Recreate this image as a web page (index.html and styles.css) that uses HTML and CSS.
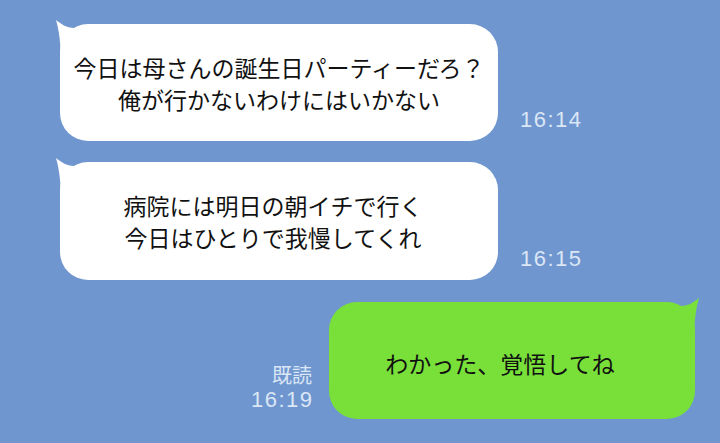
FILE: index.html
```
<!DOCTYPE html>
<html lang="ja">
<head>
    <meta charset="UTF-8">
    <meta name="viewport" content="width=device-width, initial-scale=1.0">
    <title>トーク</title>
    <link rel="stylesheet" href="styles.css">
</head>
<body>
    <div class="chat">
        <!-- 相手のメッセージ -->
        <div class="row">
            <div class="bubble left">
                <svg class="tail" viewBox="-6 -6 40 50" width="40" height="50"><path d="M1 40 C1 20 -1 6 -4 -4 C2 1 8 4 14 4 L30 0 L30 40 Z"/></svg>
                <p>今日は母さんの誕生日パーティーだろ？<br>俺が行かないわけにはいかない</p>
            </div>
            <span class="time">16:14</span>
        </div>

        <div class="row">
            <div class="bubble left second">
                <svg class="tail" viewBox="-6 -6 40 50" width="40" height="50"><path d="M1 40 C1 20 -1 6 -4 -4 C2 1 8 4 14 4 L30 0 L30 40 Z"/></svg>
                <p>病院には明日の朝イチで行く<br>今日はひとりで我慢してくれ</p>
            </div>
            <span class="time">16:15</span>
        </div>

        <!-- 自分のメッセージ -->
        <div class="row mine">
            <div class="meta">
                <span class="read">既読</span>
                <span class="time">16:19</span>
            </div>
            <div class="bubble right">
                <svg class="tail" viewBox="-6 -6 40 50" width="40" height="50"><path d="M1 40 C1 20 -1 6 -4 -4 C2 1 8 4 14 4 L30 0 L30 40 Z"/></svg>
                <p>わかった、覚悟してね</p>
            </div>
        </div>
    </div>
</body>
</html>
```
FILE: styles.css
```
body {
    margin: 0;
    background-color: #6f96cf;
    font-family: "Noto Sans CJK JP", "Noto Sans", sans-serif;
}
.chat {
    display: flex;
    flex-direction: column;
    gap: 21px;
    padding: 24px 25px 0 60px;
}
.row {
    display: flex;
    align-items: flex-end;
}
.row.mine {
    justify-content: flex-end;
    margin-top: 1px;
}
.bubble {
    position: relative;
    display: flex;
    align-items: center;
    justify-content: center;
    box-sizing: border-box;
    height: 117px;
    border-radius: 28px;
    background-color: #ffffff;
}
.bubble p {
    position: relative;
    margin: 0;
    font-size: 23px;
    line-height: 32px;
    color: #111;
    text-align: center;
    white-space: nowrap;
}
.bubble.left {
    width: 438px;
}
.bubble.second {
    height: 118px;
    padding-right: 12px;
}
.bubble.right {
    width: 366px;
    padding: 4px 24px 0 0;
    background-color: #79e03a;
}
.tail {
    position: absolute;
    top: -6px;
    left: -6px;
    fill: #ffffff;
}
.bubble.right .tail {
    left: auto;
    right: -6px;
    transform: scaleX(-1);
    fill: #79e03a;
}
.time {
    font-family: "Liberation Sans", Arial, sans-serif;
    font-size: 22px;
    line-height: 22px;
    letter-spacing: 1.5px;
    color: #dbe6f6;
}
.row > .time {
    margin: 0 0 10px 22px;
}
.meta {
    display: flex;
    flex-direction: column;
    align-items: flex-end;
    margin: 0 17px 8px 0;
}
.read {
    font-size: 20px;
    line-height: 20px;
    margin-bottom: 4px;
    color: #dbe6f6;
}
.meta .time {
    margin-right: -1.5px;
}
```
